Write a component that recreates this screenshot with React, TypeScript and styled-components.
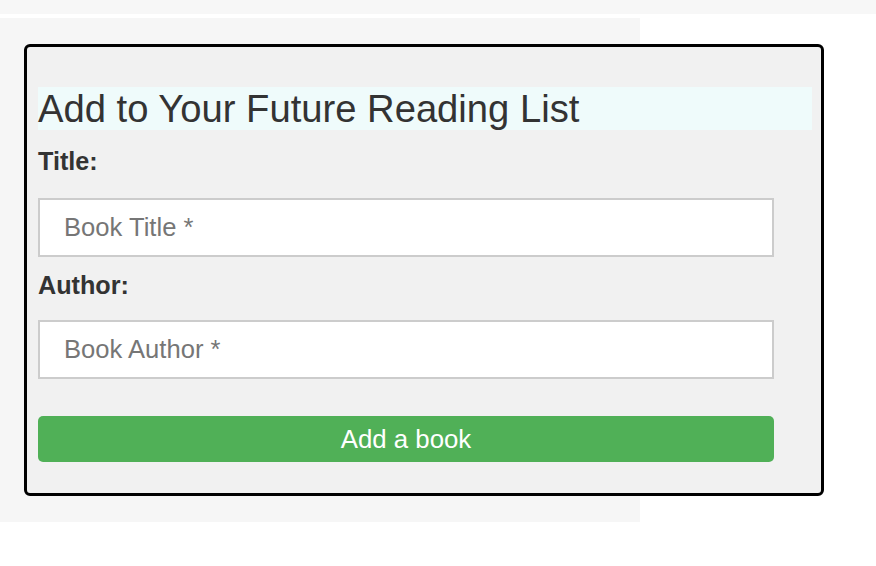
import React from "react";
import styled, { createGlobalStyle } from "styled-components";

const Global = createGlobalStyle`
  html, body { margin: 0; padding: 0; background: #ffffff; }
  body { font-family: "Liberation Sans", Arial, sans-serif; color: #333333; }
  * { box-sizing: border-box; }
`;

const TopBar = styled.div`
  height: 14px;
  background: #f7f7f7;
  margin-bottom: 4px;
`;

const Panel = styled.div`
  width: 640px;
  background: #f6f6f6;
  padding: 26px 0 26px 24px;
`;

const Card = styled.form`
  width: 800px;
  border: 3px solid #000000;
  border-radius: 6px;
  background: #f1f1f1;
  padding: 40px 9px 31px 11px;
  display: flex;
  flex-direction: column;
`;

const Heading = styled.h2`
  margin: 0 0 17px 0;
  font-size: 38.2px;
  font-weight: 400;
  line-height: 43px;
  background: #effbfb;
  color: #333333;
`;

const Label = styled.label<{ $gap: number }>`
  font-size: 25.2px;
  font-weight: 700;
  line-height: 29px;
  color: #333333;
  margin-bottom: ${(p) => p.$gap}px;
`;

const Input = styled.input<{ $after: number }>`
  width: 736px;
  height: 59px;
  border: 2px solid #cccccc;
  background: #ffffff;
  padding: 0 24px;
  font-family: "Liberation Sans", Arial, sans-serif;
  font-size: 25.6px;
  color: #333333;
  outline: none;
  margin-bottom: ${(p) => p.$after}px;
  &::placeholder { color: #767676; }
`;

const Button = styled.button`
  width: 736px;
  height: 46px;
  border: none;
  border-radius: 5px;
  background: #50b057;
  color: #ffffff;
  font-family: "Liberation Sans", Arial, sans-serif;
  font-size: 25.8px;
  padding: 0;
  cursor: pointer;
`;

export default function App() {
  return (
    <>
      <Global />
      <TopBar />
      <Panel>
        <Card onSubmit={(e) => e.preventDefault()}>
          <Heading>Add to Your Future Reading List</Heading>
          <Label $gap={22}>Title:</Label>
          <Input $after={14} placeholder="Book Title *" />
          <Label $gap={20}>Author:</Label>
          <Input $after={37} placeholder="Book Author *" />
          <Button type="submit">Add a book</Button>
        </Card>
      </Panel>
    </>
  );
}
